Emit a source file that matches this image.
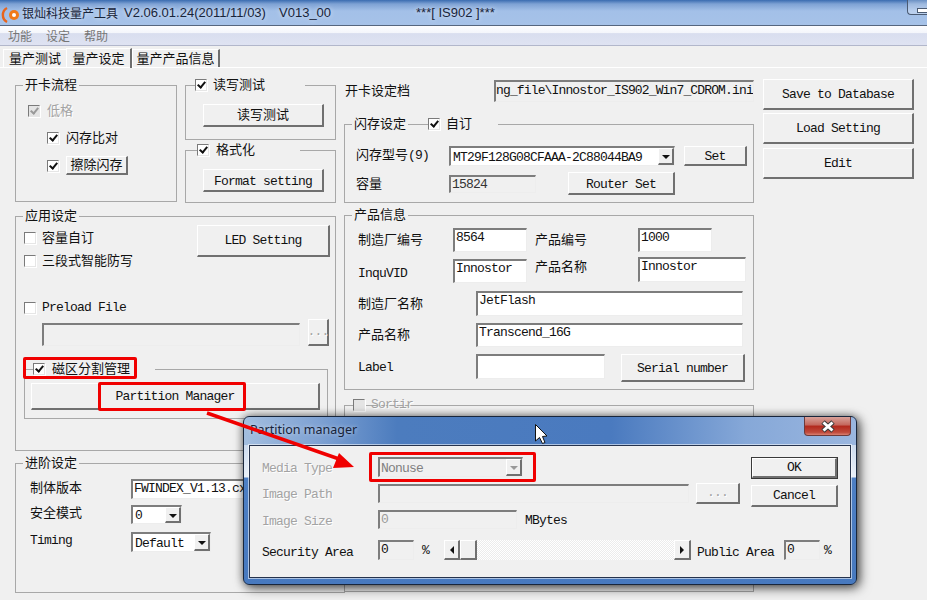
<template>
  <div class="app">
    <header class="title">
      <svg class="logo" width="18" height="20" viewBox="0 0 18 20">
        <path d="M6 5 A8 8 0 0 0 6 19" fill="none" stroke="#e8641c" stroke-width="2.4" />
        <circle cx="13" cy="12" r="5" fill="#f07a1a" />
        <circle cx="13" cy="12" r="2" fill="#fff" />
      </svg>
      <span class="t-a">银灿科技量产工具</span>
      <span class="t-b">V2.06.01.24(2011/11/03)</span>
      <span class="t-c">V013_00</span>
      <span class="t-d">***[ IS902 ]***</span>
      <span class="min"><i></i></span>
    </header>
    <nav class="menu"><span>功能</span><span>设定</span><span>帮助</span></nav>
    <div class="tabs">
      <span class="tab t1 c">量产测试</span>
      <span class="tab t2 c">量产设定</span>
      <span class="tab t3 c">量产产品信息</span>
    </div>

    <main class="page">
      <section class="col-left">
        <div class="top-groups">
          <div class="group g1">
            <div class="legend lg1"><span class="c">开卡流程</span></div>
            <div class="r r-low"><span class="ck on dis"></span><span class="c gray">低格</span></div>
            <div class="r r-cmp"><span class="ck on"></span><span class="c">闪存比对</span></div>
            <div class="r r-era"><span class="ck on"></span><span class="btn b-era c">擦除闪存</span></div>
          </div>
          <div class="stack">
            <div class="group g2">
              <div class="legend lg2"><span class="ck on"></span><span class="c">读写测试</span></div>
              <span class="btn b-test c">读写测试</span>
            </div>
            <div class="group g3">
              <div class="legend lg3"><span class="ck on"></span><span class="c">格式化</span></div>
              <span class="btn b-test b-format">Format setting</span>
            </div>
          </div>
        </div>

        <div class="group g4">
          <div class="legend lg1"><span class="c">应用设定</span></div>
          <div class="app-top">
            <div class="app-checks">
              <div class="r"><span class="ck"></span><span class="c">容量自订</span></div>
              <div class="r"><span class="ck"></span><span class="c">三段式智能防写</span></div>
            </div>
            <span class="btn b-led">LED Setting</span>
          </div>
          <div class="r r-pre"><span class="ck"></span><span>Preload File</span></div>
          <div class="pre-in">
            <span class="in dis-in w258"></span>
            <span class="btn b-dots gray">...</span>
          </div>
          <div class="group g5">
            <div class="legend lg5"><span class="ck on"></span><span class="c">磁区分割管理</span></div>
            <span class="btn b-part">Partition Manager</span>
          </div>
        </div>

        <div class="group g6">
          <div class="legend lg1"><span class="c">进阶设定</span></div>
          <div class="adv adv1">
            <span class="c adv-l">制体版本</span>
            <span class="in w200">FWINDEX_V1.13.cxx</span>
          </div>
          <div class="adv adv2">
            <span class="c adv-l">安全模式</span>
            <span class="combo w51"><b>0</b><i class="drop"></i></span>
          </div>
          <div class="adv adv3">
            <span class="adv-l">Timing</span>
            <span class="combo w80"><b>Default</b><i class="drop"></i></span>
          </div>
        </div>
      </section>

      <section class="col-mid">
        <div class="file-row">
          <span class="c file-l">开卡设定档</span>
          <span class="in file-in">ng_file\Innostor_IS902_Win7_CDROM.ini</span>
        </div>

        <div class="group g7">
          <div class="legend lg7">
            <span class="c lg7-a">闪存设定</span>
            <span class="lg7-b"><span class="ck on"></span><span class="c">自订</span></span>
          </div>
          <div class="fl fl1">
            <span class="fl-l"><span class="c">闪存型号</span>(9)</span>
            <span class="combo w226"><b>MT29F128G08CFAAA-2C88044BA9</b><i class="drop"></i></span>
            <span class="btn b-set">Set</span>
          </div>
          <div class="fl fl2">
            <span class="fl-l c">容量</span>
            <span class="in w87 dis-in dark">15824</span>
            <span class="btn b-router">Router Set</span>
          </div>
        </div>

        <div class="group g8">
          <div class="legend lg1"><span class="c">产品信息</span></div>
          <div class="p p1">
            <span class="c p-l">制造厂编号</span>
            <span class="in w74 h24">8564</span>
            <span class="c p-m">产品编号</span>
            <span class="in w74 h24">1000</span>
          </div>
          <div class="p p2">
            <span class="p-l inq">InquVID</span>
            <span class="in w74 h24 in-down">Innostor</span>
            <span class="c p-m name">产品名称</span>
            <span class="in w108 h25">Innostor</span>
          </div>
          <div class="p p3">
            <span class="c p-w">制造厂名称</span>
            <span class="in w267 h25">JetFlash</span>
          </div>
          <div class="p p4">
            <span class="c p-w">产品名称</span>
            <span class="in w267 h24">Transcend_16G</span>
          </div>
          <div class="p p5">
            <span class="p-w">Label</span>
            <span class="in w129 h25"></span>
            <span class="btn b-serial">Serial number</span>
          </div>
        </div>

        <div class="group g9">
          <div class="legend lg9"><span class="ck dis"></span><span class="gray">Sortir</span></div>
        </div>
      </section>

      <aside class="col-right">
        <span class="btn b-side">Save to Database</span>
        <span class="btn b-side">Load Setting</span>
        <span class="btn b-side">Edit</span>
      </aside>
    </main>

    <div class="mark m1"></div>
    <div class="mark m2"></div>

    <div class="dialog">
      <div class="d-title">
        <span class="d-name">Partition manager</span>
        <span class="close">
          <svg width="16" height="13" viewBox="0 0 16 13">
            <path d="M3 2 L13 11 M13 2 L3 11" stroke="#3a3a3a" stroke-width="5" />
            <path d="M3.5 2.5 L12.5 10.5 M12.5 2.5 L3.5 10.5" stroke="#fff" stroke-width="3" />
          </svg>
        </span>
      </div>
      <div class="panel">
        <div class="d-upper">
          <div class="d-left">
            <div class="dr dr1">
              <span class="d-l gray">Media Type</span>
              <span class="combo w145 dis-combo"><b>Nonuse</b><i class="drop"></i></span>
            </div>
            <div class="dr dr2">
              <span class="d-l gray">Image Path</span>
              <span class="in dis-in w311"></span>
              <span class="btn b-dlg-dots gray">...</span>
            </div>
            <div class="dr dr3">
              <span class="d-l gray">Image Size</span>
              <span class="in dis-in w139 gray-in">0</span>
              <span class="mb">MBytes</span>
            </div>
          </div>
          <div class="d-right">
            <span class="ok-wrap"><span class="btn b-ok">OK</span></span>
            <span class="btn b-cancel">Cancel</span>
          </div>
        </div>
        <div class="dr dr4">
          <span class="d-l">Security Area</span>
          <span class="in dis-in w36">0</span>
          <span class="pct">%</span>
          <div class="scroll">
            <span class="btn sb sb-l"><i class="tri-l"></i></span>
            <span class="btn sb sb-t"></span>
            <span class="track"></span>
            <span class="btn sb sb-r"><i class="tri-r"></i></span>
          </div>
          <span class="pub">Public Area</span>
          <span class="in dis-in w36">0</span>
          <span class="pct2">%</span>
        </div>
      </div>
    </div>

    <div class="mark m3"></div>

    <svg class="overlay" width="927" height="600" viewBox="0 0 927 600">
      <line x1="207" y1="413" x2="342" y2="460" stroke="#f00000" stroke-width="3.5" />
      <polygon points="339,453 354,467 333,468" fill="#f00000" />
      <polygon points="535.5,424.5 535.5,441 539.5,437.5 542.5,443.5 545,442.5 542.5,436.5 547,436" fill="#fff" stroke="#111" stroke-width="1" />
    </svg>
  </div>
</template>

<style>
html, body { margin: 0; background: #f0f0f0; }
</style>

<style scoped>
.app {
  position: relative;
  width: 927px;
  height: 600px;
  overflow: hidden;
  background: #f0f0f0;
  font-family: "Liberation Mono", "Noto Sans CJK SC", monospace;
  font-size: 13px;
  letter-spacing: -0.8px;
  line-height: 14px;
  color: #111;
}
.c { font-family: "Noto Sans CJK SC", sans-serif; font-size: 13px; letter-spacing: 0; }
.gray { color: #a3a3a3; text-shadow: 1px 1px 0 #fff; }

/* CJK glyphs sit low in their line box; lift the labels a little */
.legend .c, .r .c:not(.btn), .fl-l .c, .fl-l.c, .file-l, .adv-l, .p-l.c, .p-m.c, .p-w.c { margin-top: -2px; }
.adv-l.c { margin-top: -5px; }
.adv3 .adv-l { margin-top: -3px; }
.fl-l .c { display: inline-block; vertical-align: top; }

/* title */
.title {
  display: flex;
  align-items: center;
  height: 26px;
  box-sizing: border-box;
  border-bottom: 1px solid #56667e;
  background: linear-gradient(#3a6cb0 0, #7ea2d4 4px, #a3c0e8 11px, #a6c2e8 100%);
  font-family: "Liberation Sans", "Noto Sans CJK SC", sans-serif;
  font-size: 13px;
  letter-spacing: 0;
  color: #18243a;
  text-shadow: 0 0 5px rgba(255, 255, 255, .75);
}
.logo { margin-left: 1px; flex: none; }
.t-a { margin-left: 3px; font-family: "Noto Sans CJK SC", sans-serif; font-size: 12px; }
.t-b { margin-left: 6px; width: 155px; }
.t-c { width: 137px; }
.t-d { flex: 1; }
.min {
  align-self: flex-start;
  width: 20px;
  height: 16px;
  margin-top: -1px;
  box-sizing: border-box;
  border: 1px solid #4a5a72;
  border-right: 0;
  border-radius: 0 0 0 4px;
  background: rgba(255, 255, 255, .25);
  padding: 8px 0 0 9px;
}
.min i { display: block; height: 3px; background: #fff; border: 1px solid #4a5a72; border-right: 0; }

.menu {
  display: flex;
  gap: 14px;
  align-items: center;
  height: 20px;
  box-sizing: border-box;
  padding: 1px 0 0 8px;
  border-bottom: 1px solid #b2b7cb;
  background: linear-gradient(#fdfdff, #f4f6fb 35%, #d9deef 40%, #dfe3f2);
  font-family: "Noto Sans CJK SC", sans-serif;
  font-size: 12px;
  letter-spacing: 0;
  color: #767676;
}

.tabs {
  display: flex;
  align-items: flex-end;
  height: 22px;
  padding-left: 3px;
  border-bottom: 1px solid #fff;
  box-sizing: border-box;
}
.tab {
  box-sizing: border-box;
  height: 18px;
  line-height: 16px;
  border-left: 1px solid #fff;
  border-top: 1px solid #fff;
  border-right: 2px solid #6e6e6e;
  text-align: center;
}
.t1 { width: 63px; border-right: 0; }
.t2 { width: 66px; height: 20px; line-height: 18px; margin-bottom: -1px; }
.t3 { width: 88px; }

.page { display: flex; padding: 11px 0 0 15px; }
.col-left { width: 321px; margin-top: 6px; margin-right: 8px; }
.col-mid { width: 410px; margin-top: 1px; margin-right: 9px; }
.col-right { display: flex; flex-direction: column; width: 151px; }

/* groups */
.group { box-sizing: border-box; border: 1px solid #a8a8a8; }
.legend {
  display: flex;
  align-items: center;
  width: fit-content;
  height: 14px;
  margin-top: -8px;
  background: #f0f0f0;
}
.lg1 { margin-left: 7px; padding: 0 2px; }
.lg2 { margin-left: 9px; padding-right: 40px; gap: 6px; }
.lg3 { margin-left: 11px; padding-right: 45px; gap: 7px; }
.lg5 { margin-left: 8px; padding-right: 25px; gap: 7px; }
.lg7 { margin-left: 7px; background: transparent; gap: 20px; }
.lg7-a { background: #f0f0f0; padding: 0 2px; }
.lg7-b { display: flex; align-items: center; gap: 6px; background: #f0f0f0; padding-right: 26px; }
.lg9 { margin-left: 8px; background: transparent; gap: 6px; }

.ck {
  position: relative;
  display: block;
  flex: none;
  width: 12px;
  height: 12px;
  box-sizing: border-box;
  background: #fff;
  border: 1px solid;
  border-color: #7a7a7a #e6e6e6 #e6e6e6 #7a7a7a;
  box-shadow: 1px 1px 0 #fff;
}
.ck.on::after {
  content: "";
  position: absolute;
  left: 3px;
  top: 0;
  width: 3px;
  height: 6px;
  border: solid #111;
  border-width: 0 2px 2px 0;
  transform: rotate(40deg);
}
.ck.dis { background: #e4e4e4; }
.ck.on.dis::after { border-color: #9a9a9a; }

.r { display: flex; align-items: center; gap: 7px; }

.btn {
  display: flex;
  align-items: center;
  justify-content: center;
  flex: none;
  box-sizing: border-box;
  background: #f0f0f0;
  border-style: solid;
  border-width: 1px 2px 2px 1px;
  border-color: #fff #707070 #707070 #fff;
  padding-top: 2px;
}
.btn.c { padding-top: 0; padding-bottom: 2px; }
.b-led, .b-ok, .b-cancel, .sb, .b-dots, .b-dlg-dots { padding-top: 0; }
.b-format, .b-router { padding-top: 4px; }

.in {
  display: block;
  flex: none;
  box-sizing: border-box;
  background: #fff;
  border-style: solid;
  border-width: 2px 1px 1px 2px;
  border-color: #7d7d7d #ededed #ededed #7d7d7d;
  padding: 1px 1px 0;
  white-space: nowrap;
  overflow: hidden;
}
.dis-in { background: #f0f0f0; }
.dark { color: #333; }
.gray-in { color: #9a9a9a; }

.combo {
  display: flex;
  flex: none;
  box-sizing: border-box;
  background: #fff;
  border-style: solid;
  border-width: 2px 1px 1px 2px;
  border-color: #7d7d7d #ededed #ededed #7d7d7d;
  padding-left: 2px;
  align-items: center;
}
.combo b { flex: 1; font-weight: 400; white-space: nowrap; overflow: hidden; padding-top: 2px; }
.drop {
  position: relative;
  display: block;
  align-self: stretch;
  flex: none;
  width: 16px;
  box-sizing: border-box;
  background: #f0f0f0;
  border-style: solid;
  border-width: 1px 2px 2px 1px;
  border-color: #fff #707070 #707070 #fff;
}
.drop::after {
  content: "";
  position: absolute;
  left: 3px;
  top: 6px;
  border: solid transparent;
  border-width: 4px 4px 0;
  border-top-color: #111;
}
.dis-combo { background: #f0f0f0; color: #808080; }
.dis-combo .drop::after { border-top-color: #999; }

/* left */
.top-groups { display: flex; gap: 8px; }
.g1 { width: 162px; height: 117px; }
.r-low { margin: 13px 0 0 12px; height: 12px; }
.r-cmp { margin: 15px 0 0 31px; height: 12px; }
.r-era { margin: 12px 0 0 31px; height: 19px; }
.b-era { width: 62px; height: 19px; }
.stack { display: flex; flex-direction: column; gap: 10px; }
.g2 { width: 151px; height: 55px; }
.g3 { width: 151px; height: 53px; }
.b-test { width: 121px; height: 23px; margin: 12px 0 0 17px; }

.g4 { height: 235px; margin-top: 13px; }
.app-top { display: flex; height: 46px; }
.app-checks { display: flex; flex-direction: column; gap: 9px; margin: 8px 0 0 8px; }
.app-checks .r { height: 14px; gap: 6px; }
.b-led { width: 133px; height: 32px; margin: 2px 5px 0 auto; }
.r-pre { margin: 33px 0 0 8px; height: 12px; gap: 6px; }
.pre-in { display: flex; align-items: flex-end; gap: 8px; margin: 5px 0 0 26px; height: 27px; }
.w258 { width: 258px; height: 23px; }
.b-dots { width: 21px; height: 27px; }
.g5 { width: 304px; height: 50px; margin: 23px 0 0 8px; }
.b-part { width: 289px; height: 27px; margin: 7px 0 0 6px; }

.g6 { width: 330px; height: 130px; margin-top: 12px; }
.adv { display: flex; align-items: center; }
.adv-l { width: 101px; margin-left: 14px; flex: none; }
.adv1 { margin-top: 9px; height: 20px; }
.adv2 { margin-top: 6px; height: 19px; }
.adv3 { margin-top: 8px; height: 20px; }
.w200 { width: 200px; height: 20px; }
.w51 { width: 51px; height: 19px; }
.w80 { width: 80px; height: 20px; }

/* middle */
.file-row { display: flex; align-items: center; height: 22px; }
.file-l { width: 149px; margin-left: 1px; flex: none; }
.file-in {
  width: 260px;
  height: 22px;
  padding: 0;
  line-height: 17px;
  letter-spacing: -0.86px;
  background: #f0f0f0;
}
.g7 { height: 79px; margin-top: 22px; }
.fl { display: flex; align-items: center; margin-left: 11px; }
.fl1 { height: 20px; margin-top: 15px; }
.fl2 { height: 23px; margin-top: 6px; }
.fl-l { width: 93px; flex: none; }
.w226 { width: 226px; height: 20px; }
.b-set { width: 63px; height: 20px; margin-left: 9px; }
.w87 { width: 87px; height: 18px; }
.b-router { width: 107px; height: 23px; margin-left: 32px; }

.g8 { width: 410px; height: 175px; margin-top: 12px; }
.p { display: flex; align-items: center; margin-left: 13px; }
.p-l { width: 95px; flex: none; }
.p-m { width: 103px; margin-left: 8px; flex: none; }
.p-w { width: 118px; flex: none; }
.p1 { height: 24px; margin-top: 6px; }
.p2 { height: 26px; margin-top: 5px; align-items: flex-start; }
.p-l.inq { margin-top: 10px; }
.p-m.name { margin-top: 2px; }
.in-down { margin-top: 2px; }
.p3 { height: 25px; margin-top: 8px; }
.p4 { height: 24px; margin-top: 7px; }
.p5 { height: 28px; margin-top: 7px; align-items: flex-start; }
.p5 .p-w { margin-top: 7px; }
.w74 { width: 74px; }
.w108 { width: 108px; }
.w267 { width: 267px; }
.w129 { width: 129px; }
.h24 { height: 24px; }
.h25 { height: 25px; }
.b-serial { width: 124px; height: 28px; margin-left: 16px; }

.g9 { width: 410px; height: 187px; margin-top: 15px; }

.b-side { width: 151px; height: 31px; margin-bottom: 3px; }
.b-side:nth-child(2) { margin-bottom: 4px; }

/* highlights */
.mark {
  position: absolute;
  box-sizing: border-box;
  border: 3px solid #f00000;
  border-radius: 2px;
  pointer-events: none;
}
.m1 { left: 23px; top: 357px; width: 114px; height: 22px; }
.m2 { left: 98px; top: 382px; width: 148px; height: 29px; }
.m3 { left: 369px; top: 452px; width: 167px; height: 30px; }

/* dialog */
.dialog {
  position: absolute;
  left: 243px;
  top: 416px;
  width: 614px;
  height: 169px;
  box-sizing: border-box;
  border: 1px solid #18263c;
  border-radius: 6px;
  background:
    linear-gradient(90deg, #a3bedf 0, #7fa2d3 12%, #4c7cbe 25%, #4a7abf 60%, #86a8d8 82%, #9ab6df 100%) 0 0 / 100% 28px no-repeat,
    linear-gradient(#cddbee 28px, #e9f0f8 60px, #4d7fc4 61px, #4779bf 100%);
  box-shadow: 3px 3px 12px rgba(0, 0, 0, .6), 0 0 8px rgba(0, 0, 0, .4);
}
.d-title { display: flex; align-items: flex-start; height: 28px; }
.d-name {
  margin-left: 6px;
  font-family: "Noto Sans", sans-serif;
  font-size: 12.5px;
  letter-spacing: 0;
  line-height: 26px;
  color: #16233a;
  text-shadow: 0 0 4px rgba(255, 255, 255, .6);
}
.close {
  display: flex;
  align-items: center;
  justify-content: center;
  width: 47px;
  height: 19px;
  margin-left: auto;
  margin-right: 5px;
  box-sizing: border-box;
  border: 1px solid #6e3a3a;
  border-top: 0;
  border-radius: 0 0 4px 4px;
  background: linear-gradient(#d9a29a, #c4665c 45%, #b2281c 50%, #c04a3c 85%, #d98072);
}
.panel {
  height: 133px;
  margin: 0 5px;
  box-sizing: border-box;
  background: #f0f0f0;
  border: 1px solid #26334d;
  box-shadow: 0 0 0 1px rgba(255, 255, 255, .55);
}
.d-upper { display: flex; height: 94px; padding: 11px 0 0 12px; box-sizing: border-box; }
.d-left { width: 489px; flex: none; }
.d-right { display: flex; flex-direction: column; gap: 6px; width: 87px; }
.dr { display: flex; align-items: center; }
.d-l { width: 116px; flex: none; margin-top: 3px; }
.dr3 .d-l, .dr4 .d-l { margin-top: 5px; }
.dr1 { height: 20px; }
.dr2 { height: 21px; margin-top: 6px; }
.dr3 { height: 19px; margin-top: 6px; }
.dr4 { height: 20px; margin-left: 12px; }
.w145 { width: 145px; height: 20px; padding-left: 1px; }
.w311 { width: 311px; height: 19px; }
.b-dlg-dots { width: 44px; height: 21px; margin-left: 7px; }
.w139 { width: 139px; height: 19px; }
.mb { margin-left: 8px; margin-top: 2px; }
.w36 { width: 36px; height: 20px; }
.pct { width: 14px; margin-left: 8px; flex: none; }
.ok-wrap { display: block; height: 22px; box-sizing: border-box; border: 1px solid #3a3a3a; }
.b-ok { width: 85px; height: 20px; }
.b-cancel { width: 87px; height: 22px; }
.scroll { display: flex; width: 247px; height: 20px; margin-left: 8px; flex: none; }
.sb { height: 20px; }
.sb-l { width: 16px; }
.sb-t { width: 17px; }
.sb-r { width: 17px; }
.track {
  flex: 1;
  background: repeating-conic-gradient(#fff 0 25%, #ececec 0 50%) 0 0 / 2px 2px;
}
.tri-l, .tri-r { display: block; border: solid transparent; }
.tri-l { border-width: 4px 4px 4px 0; border-right-color: #111; }
.tri-r { border-width: 4px 0 4px 4px; border-left-color: #111; }
.pub { width: 87px; margin-left: 6px; flex: none; margin-top: 5px; }
.pct, .pct2 { margin-top: 1px; }
.pct2 { margin-left: 4px; }

.overlay { position: absolute; left: 0; top: 0; pointer-events: none; }
</style>
